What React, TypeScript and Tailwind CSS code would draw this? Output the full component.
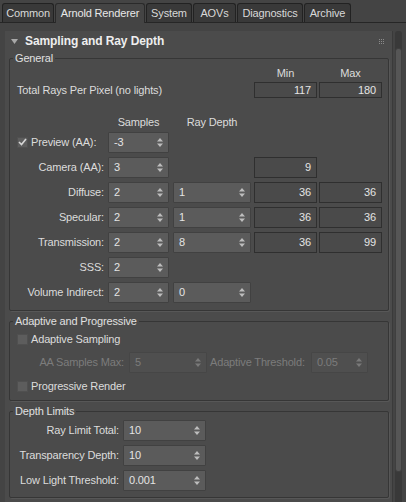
import React from 'react'

const FONT = { fontFamily: '"Liberation Sans", Arial, sans-serif' }

const TABS = ['Common', 'Arnold Renderer', 'System', 'AOVs', 'Diagnostics', 'Archive']
const TAB_W = ['w-[52px]', 'w-[90px]', 'w-[46px]', 'w-[43px]', 'w-[66px]', 'w-[47px]']

function Arrows({ dim }: { dim?: boolean }) {
  return (
    <svg width="6" height="9" viewBox="0 0 6 9" className="shrink-0">
      <path d="M3 0 L6 3.5 L0 3.5 Z M0 5.5 L6 5.5 L3 9 Z" fill={dim ? '#7a7a7a' : '#bdbdbd'} />
    </svg>
  )
}

function Spinner({ value, w, dim }: { value: string; w: string; dim?: boolean }) {
  return (
    <div
      className={`${w} h-[21px] flex items-center justify-between pl-[5px] pr-[5px] border rounded-[1px] ${
        dim ? 'bg-[#4f4f4f] border-[#464646] text-[#7c7c7c]' : 'bg-[#5b5b5b] border-[#414141] text-[#e4e4e4]'
      }`}
    >
      <span>{value}</span>
      <Arrows dim={dim} />
    </div>
  )
}

function Field({ value, h = 'h-[21px]' }: { value: string; h?: string }) {
  return (
    <div className={`w-[63px] ${h} flex items-center justify-end pr-[5px] bg-[#4a4a4a] border border-[#2f2f2f] text-[#e4e4e4]`}>
      {value}
    </div>
  )
}

function Check({ on }: { on?: boolean }) {
  return (
    <div className="w-[11px] h-[11px] bg-[#5d5d5d] border border-[#505050] flex items-center justify-center">
      {on && (
        <svg width="9" height="8" viewBox="0 0 9 8">
          <path d="M1 4 L3.5 6.5 L8 1" stroke="#d6d6d6" strokeWidth="1.6" fill="none" />
        </svg>
      )}
    </div>
  )
}

function Group({ title, children, className = '' }: { title: string; children: React.ReactNode; className?: string }) {
  return (
    <fieldset className={`mx-[4px] w-[380px] border border-[#363636] rounded-[2px] shadow-[1px_1px_0_#575757] ${className}`}>
      <legend className="ml-[3px] px-[2px] leading-[15px] text-[#e0e0e0]">{title}</legend>
      {children}
    </fieldset>
  )
}

type Row = { label: string; s: string; r?: string; min?: string; max?: string; check?: boolean }

const ROWS: Row[] = [
  { label: 'Preview (AA):', s: '-3', check: true },
  { label: 'Camera (AA):', s: '3', min: '9' },
  { label: 'Diffuse:', s: '2', r: '1', min: '36', max: '36' },
  { label: 'Specular:', s: '2', r: '1', min: '36', max: '36' },
  { label: 'Transmission:', s: '2', r: '8', min: '36', max: '99' },
  { label: 'SSS:', s: '2' },
  { label: 'Volume Indirect:', s: '2', r: '0' },
]

export default function App() {
  return (
    <div
      className="w-[406px] h-[502px] bg-[#444444] overflow-hidden whitespace-nowrap text-[11px] tracking-[-0.15px] text-[#dcdcdc]"
      style={FONT}
    >
      {/* tab strip */}
      <div className="h-[23px] flex items-end pl-[2px] border-b border-[#262626]">
        {TABS.map((t, i) => (
          <div
            key={t}
            className={`${TAB_W[i]} flex items-center justify-center rounded-t-[3px] border border-b-0 ${
              i === 1
                ? 'h-[20px] -mb-px bg-[#444444] border-[#2a2a2a] text-[#e8e8e8]'
                : 'h-[19px] bg-[#393939] border-[#222222] text-[#d8d8d8]'
            } ${i > 0 ? 'ml-[1px]' : ''}`}
          >
            {t}
          </div>
        ))}
      </div>

      <div className="flex">
        {/* rollout */}
        <div className="ml-[5px] mt-[8px] w-[388px] h-[480px] bg-[#4b4b4b] border-r border-[#3a3a3a]">
          <div className="h-[20px] flex items-center pl-[6px] pr-[8px]">
            <svg width="7" height="5" viewBox="0 0 7 5" className="mr-[7px]">
              <path d="M0 0 L7 0 L3.5 5 Z" fill="#a8a8a8" />
            </svg>
            <span className="font-bold text-[12px] tracking-[-0.1px] text-[#eeeeee] flex-1">Sampling and Ray Depth</span>
            <div className="grid grid-cols-3 gap-[1px]">
              {Array.from({ length: 9 }).map((_, i) => (
                <div key={i} className="w-[1px] h-[1px] bg-[#8a8a8a]" />
              ))}
            </div>
          </div>

          <Group title="General" className="pb-[7px]">
            <div className="flex h-[14px] items-center pl-[244px]">
              <div className="w-[63px] text-center">Min</div>
              <div className="ml-[2px] w-[63px] text-center">Max</div>
            </div>
            <div className="flex items-center mt-[2px]">
              <div className="w-[244px] pl-[7px]">Total Rays Per Pixel (no lights)</div>
              <Field value="117" h="h-[16px]" />
              <div className="ml-[2px]">
                <Field value="180" h="h-[16px]" />
              </div>
            </div>
            <div className="flex h-[14px] items-center mt-[17px] pl-[98px]">
              <div className="w-[61px] text-center">Samples</div>
              <div className="ml-[4px] w-[78px] text-center">Ray Depth</div>
            </div>
            <div className="flex flex-col gap-[4px] mt-[2px]">
              {ROWS.map((r) => (
                <div key={r.label} className="flex items-center">
                  {r.check ? (
                    <div className="w-[98px] flex items-center gap-[3px] pl-[7px]">
                      <Check on />
                      <span>{r.label}</span>
                    </div>
                  ) : (
                    <div className="w-[94px] text-right mr-[4px]">{r.label}</div>
                  )}
                  <Spinner value={r.s} w="w-[61px]" />
                  <div className="ml-[4px] w-[78px]">{r.r && <Spinner value={r.r} w="w-[78px]" />}</div>
                  <div className="ml-[3px] w-[63px]">{r.min && <Field value={r.min} />}</div>
                  <div className="ml-[2px] w-[63px]">{r.max && <Field value={r.max} />}</div>
                </div>
              ))}
            </div>
          </Group>

          <Group title="Adaptive and Progressive" className="mt-[3px] pb-[5px]">
            <div className="flex items-center gap-[3px] pl-[7px] h-[17px] mt-[2px]">
              <Check />
              <span>Adaptive Sampling</span>
            </div>
            <div className="flex items-center mt-[4px] text-[#7c7c7c]">
              <div className="w-[114px] text-right mr-[5px]">AA Samples Max:</div>
              <Spinner value="5" w="w-[78px]" dim />
              <div className="ml-[3px] w-[96px]">Adaptive Threshold:</div>
              <div className="ml-[5px]">
                <Spinner value="0.05" w="w-[57px]" dim />
              </div>
            </div>
            <div className="flex items-center gap-[3px] pl-[7px] h-[17px] mt-[5px]">
              <Check />
              <span>Progressive Render</span>
            </div>
          </Group>

          <Group title="Depth Limits" className="mt-[3px] pb-[6px]">
            <div className="flex flex-col gap-[4px] mt-[1px]">
              {[
                ['Ray Limit Total:', '10'],
                ['Transparency Depth:', '10'],
                ['Low Light Threshold:', '0.001'],
              ].map(([l, v]) => (
                <div key={l} className="flex items-center">
                  <div className="w-[109px] text-right mr-[4px]">{l}</div>
                  <Spinner value={v} w="w-[83px]" />
                </div>
              ))}
            </div>
          </Group>
        </div>

        {/* scrollbar */}
        <div className="ml-[2px] mt-[8px] w-[7px] h-[480px] bg-[#393939] rounded-[3px] flex flex-col">
          <div className="h-[17px]" />
          <div className="h-[424px] bg-[#565656] rounded-[3px] border border-[#3f3f3f]" />
        </div>
      </div>
    </div>
  )
}
